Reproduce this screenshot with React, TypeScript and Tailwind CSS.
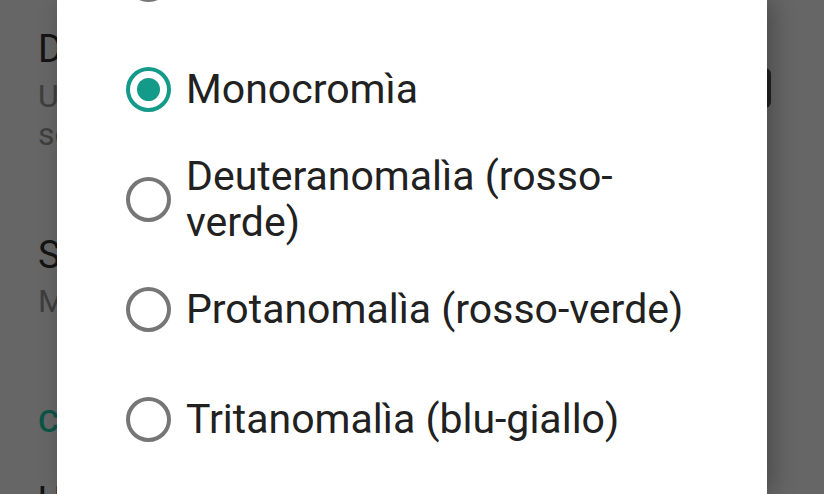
const options = [
  { label: "Disattivato", checked: false },
  { label: "Monocromìa", checked: true },
  { label: "Deuteranomalìa (rosso-verde)", checked: false },
  { label: "Protanomalìa (rosso-verde)", checked: false },
  { label: "Tritanomalìa (blu-giallo)", checked: false },
]

function Radio({ checked }: { checked: boolean }) {
  if (checked) {
    return (
      <span className="flex h-[45px] w-[45px] shrink-0 items-center justify-center rounded-full border-[4px] border-[#139a88]">
        <span className="h-[23px] w-[23px] rounded-full bg-[#139a88]" />
      </span>
    )
  }
  return <span className="h-[45px] w-[45px] shrink-0 rounded-full border-[4px] border-[#767676]" />
}

function SettingsBehind() {
  return (
    <div className="flex h-full flex-col font-['Roboto','Liberation_Sans',sans-serif]">
      <div className="flex items-start justify-between pb-[38px] pl-[38px] pr-[53px] pt-[27px]">
        <div className="flex flex-col">
          <span className="text-[38px] leading-[44px] text-[#141414]">Daltonismo</span>
          <span className="mt-[6px] text-[32px] leading-[38px] text-[#3e3e3e]">
            Usa la correzione del colore
            <br />
            schermo del dispositivo
          </span>
        </div>
        <span className="mt-[41px] h-[40px] w-[60px] rounded-[6px] bg-[#232323]" />
      </div>
      <div className="h-px bg-[#575757]" />
      <div className="flex flex-col pl-[38px] pt-[42px]">
        <span className="text-[38px] leading-[44px] text-[#141414]">Schema di correzione</span>
        <span className="mt-[5px] text-[32px] leading-[38px] text-[#3e3e3e]">Monocromìa</span>
      </div>
      <div className="pl-[38px] pt-[82px] text-[32px] font-medium leading-[38px] text-[#0b5446]">
        Colore
      </div>
      <div className="pl-[38px] pt-[39px] text-[38px] leading-[44px] text-[#141414]">Usa scorciatoia</div>
    </div>
  )
}

export default function App() {
  return (
    <div className="relative h-[494px] w-[824px] overflow-hidden bg-[#666666]">
      <SettingsBehind />
      <div className="absolute bottom-0 left-[57px] top-0 w-[710px] overflow-hidden bg-white shadow-[6px_0_22px_rgba(0,0,0,0.28)]">
        <div className="mt-[-76px] flex flex-col font-['Roboto','Liberation_Sans',sans-serif]">
          {options.map((o) => (
            <div key={o.label} className="flex h-[110px] items-center gap-[15px] pl-[69px]">
              <Radio checked={o.checked} />
              <span className="w-[520px] text-[41px] leading-[46px] text-[#212121]">{o.label}</span>
            </div>
          ))}
        </div>
      </div>
    </div>
  )
}
